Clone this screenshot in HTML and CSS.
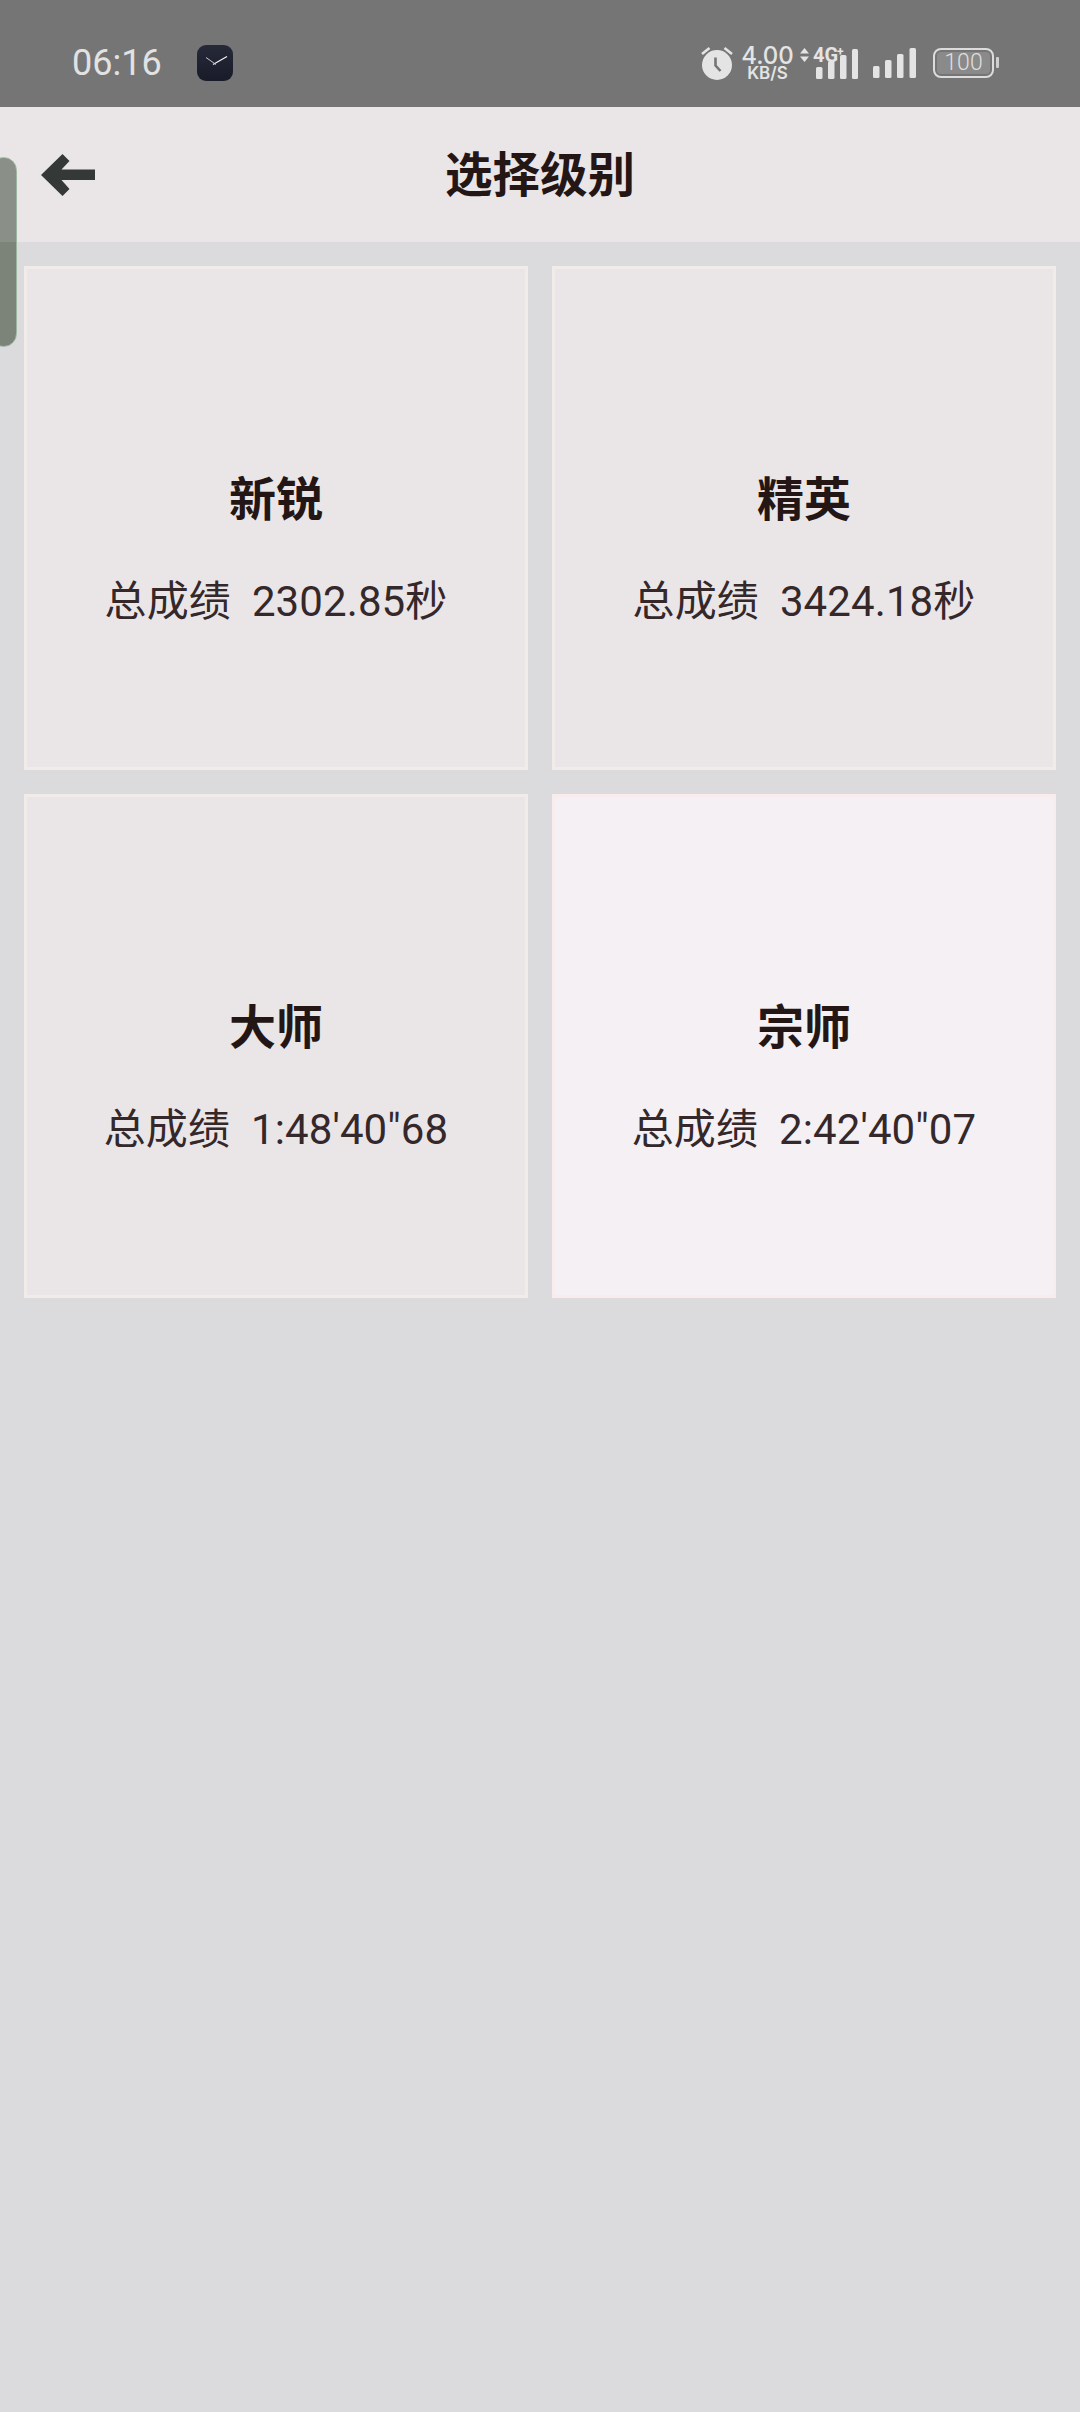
FILE: index.html
```html
<!DOCTYPE html>
<html lang="zh-CN">
<head>
<meta charset="utf-8">
<title>选择级别</title>
<link rel="stylesheet" href="styles.css">
</head>
<body>
<header class="status">
  <div class="status-left">
    <span class="time">06:16</span>
    <svg class="clock-app" viewBox="0 0 36 36" width="36" height="36">
      <defs><linearGradient id="cg" x1="0" y1="0" x2="0" y2="1"><stop offset="0" stop-color="#262938"/><stop offset="1" stop-color="#191b29"/></linearGradient></defs>
      <rect width="36" height="36" rx="9" fill="url(#cg)"/>
      <path d="M16 19.500L30 11.500" stroke="#f2f2f2" stroke-width="1.300" fill="none"/>
      <path d="M19 19.500L9 12.500" stroke="#c9c9cf" stroke-width="1" fill="none"/>
    </svg>
  </div>
  <div class="status-right">
    <svg class="alarm" viewBox="0 0 32 34" width="32" height="34">
      <path d="M1 8L8.500 2M31 8L23.500 2" stroke="#e4e4e4" stroke-width="2.600" fill="none"/>
      <circle cx="16" cy="19" r="15" fill="#e4e4e4"/>
      <path d="M14.500 11.500V19.500L19.500 25" stroke="#757575" stroke-width="2.600" fill="none"/>
    </svg>
    <div class="speed"><span class="speed-num">4.00</span><span class="speed-unit">KB/S</span></div>
    <svg class="signal-4g" viewBox="0 0 58 32" width="58" height="32">
      <path d="M0 6.500L4.500 1L9 6.500ZM0 9.500L4.500 15L9 9.500Z" fill="#e4e4e4"/>
      <text x="13" y="15" class="net">4G</text>
      <text x="37" y="9" class="net-plus">+</text>
      <rect x="16" y="20" width="6.500" height="12" rx="1.500" fill="#e4e4e4"/>
      <rect x="28" y="14" width="6.500" height="18" rx="1.500" fill="#e4e4e4"/>
      <rect x="40" y="8" width="6.500" height="24" rx="1.500" fill="#e4e4e4"/>
      <rect x="52" y="2" width="6" height="30" rx="1.500" fill="#e4e4e4"/>
    </svg>
    <svg class="signal" viewBox="0 0 43 30" width="43" height="30">
      <rect x="0" y="18" width="6.500" height="12" rx="1.500" fill="#e4e4e4"/>
      <rect x="12" y="12" width="6.500" height="18" rx="1.500" fill="#e4e4e4"/>
      <rect x="24" y="6" width="6.500" height="24" rx="1.500" fill="#e4e4e4"/>
      <rect x="36.500" y="0" width="6.500" height="30" rx="1.500" fill="#e4e4e4"/>
    </svg>
    <div class="battery">
      <div class="battery-body"><span class="battery-fill">100</span></div>
      <span class="battery-cap"></span>
    </div>
  </div>
</header>

<div class="appbar">
  <svg class="back" viewBox="0 0 54 42" width="54" height="42">
    <path d="M54 15.500H20.500L28.500 7L21.500 0L0 21L21.500 42L28.500 35L20.500 26H54Z" fill="#343938"/>
  </svg>
  <h1 class="title">选择级别</h1>
</div>

<main class="grid">
  <section class="card">
    <h2 class="card-title">新锐</h2>
    <p class="card-score">总成绩&nbsp;&nbsp;2302.85秒</p>
  </section>
  <section class="card">
    <h2 class="card-title">精英</h2>
    <p class="card-score">总成绩&nbsp;&nbsp;3424.18秒</p>
  </section>
  <section class="card">
    <h2 class="card-title">大师</h2>
    <p class="card-score">总成绩&nbsp;&nbsp;1:48'40"68</p>
  </section>
  <section class="card card-active">
    <h2 class="card-title">宗师</h2>
    <p class="card-score">总成绩&nbsp;&nbsp;2:42'40"07</p>
  </section>
</main>

<div class="side-handle"></div>
</body>
</html>
```

FILE: styles.css
```css
* { box-sizing: border-box; }

html, body {
  margin: 0;
  padding: 0;
}

body {
  position: relative;
  width: 1080px;
  height: 2412px;
  overflow: hidden;
  background: #dbdbdd;
  font-family: Roboto, "Noto Sans CJK SC", sans-serif;
  color: #241614;
}

svg { overflow: visible; }

.status {
  height: 107px;
  background: #757575;
  display: flex;
  justify-content: space-between;
  align-items: center;
  padding: 18px 81px 0 72px;
}

.status-left,
.status-right {
  display: flex;
  align-items: center;
}

.status-left { gap: 35px; }

.time {
  font-family: Roboto, sans-serif;
  font-size: 36px;
  line-height: 44px;
  color: #e2e2e2;
}

.clock-app { display: block; }

.status-right { color: #e4e4e4; }

.alarm { display: block; margin-right: 8px; }

.speed {
  display: flex;
  flex-direction: column;
  align-items: center;
  width: 53px;
  margin-right: 6px;
  font-family: Inter, sans-serif;
}

.speed-num {
  font-size: 24px;
  line-height: 21px;
  font-weight: 500;
}

.speed-unit {
  font-size: 17px;
  line-height: 15px;
  font-weight: 600;
}

.signal-4g { display: block; margin-right: 15px; }

.net {
  font-family: Roboto, sans-serif;
  font-size: 20px;
  font-weight: 700;
  fill: #e4e4e4;
}

.net-plus {
  font-family: Roboto, sans-serif;
  font-size: 12px;
  font-weight: 700;
  fill: #e4e4e4;
}

.signal { display: block; margin-right: 17px; }

.battery {
  display: flex;
  align-items: center;
  gap: 2px;
}

.battery-body {
  width: 61px;
  height: 30px;
  border: 2px solid #dcdcdc;
  border-radius: 8px;
  padding: 2px;
  display: flex;
}

.battery-fill {
  flex: 1;
  background: #8a8a8a;
  border-radius: 4px;
  color: #dedede;
  font-family: Roboto, sans-serif;
  font-size: 23px;
  font-weight: 300;
  line-height: 22px;
  text-align: center;
}

.battery-cap {
  width: 3px;
  height: 11px;
  background: #cfcfcf;
  border-radius: 1px;
}

.appbar {
  position: relative;
  height: 135px;
  background: #eae6e8;
  display: flex;
  align-items: center;
  justify-content: center;
}

.back {
  position: absolute;
  left: 41px;
  top: 47px;
  display: block;
}

.title {
  margin: -6px 0 0;
  font-size: 47.5px;
  line-height: 60px;
  font-weight: 700;
  font-family: "Noto Sans CJK SC", sans-serif;
}

.grid {
  display: grid;
  grid-template-columns: 504px 504px;
  grid-auto-rows: 504px;
  gap: 24px;
  padding: 24px;
}

.card {
  background: #eae6e8;
  border: 3px solid #f1ecea;
  padding-top: 62px;
  display: flex;
  flex-direction: column;
  align-items: center;
  justify-content: center;
}

.card-active {
  background: #f4f0f4;
  border-color: #f8ecec;
}

.card-title {
  margin: 0;
  font-size: 47px;
  line-height: 60px;
  font-weight: 700;
  font-family: "Noto Sans CJK SC", sans-serif;
}

.card-score {
  margin: 46px 0 0;
  font-size: 42px;
  line-height: 60px;
  font-weight: 400;
  letter-spacing: 0.1px;
  color: #35282a;
  white-space: nowrap;
}

.side-handle {
  position: absolute;
  left: -10px;
  top: 157px;
  width: 27px;
  height: 190px;
  border-radius: 14px;
  background: linear-gradient(#8a8f87 0, #8a8f87 84px, #7c8379 84px, #7c8379 100%);
  border: 1px solid #9cb59f;
}
```
